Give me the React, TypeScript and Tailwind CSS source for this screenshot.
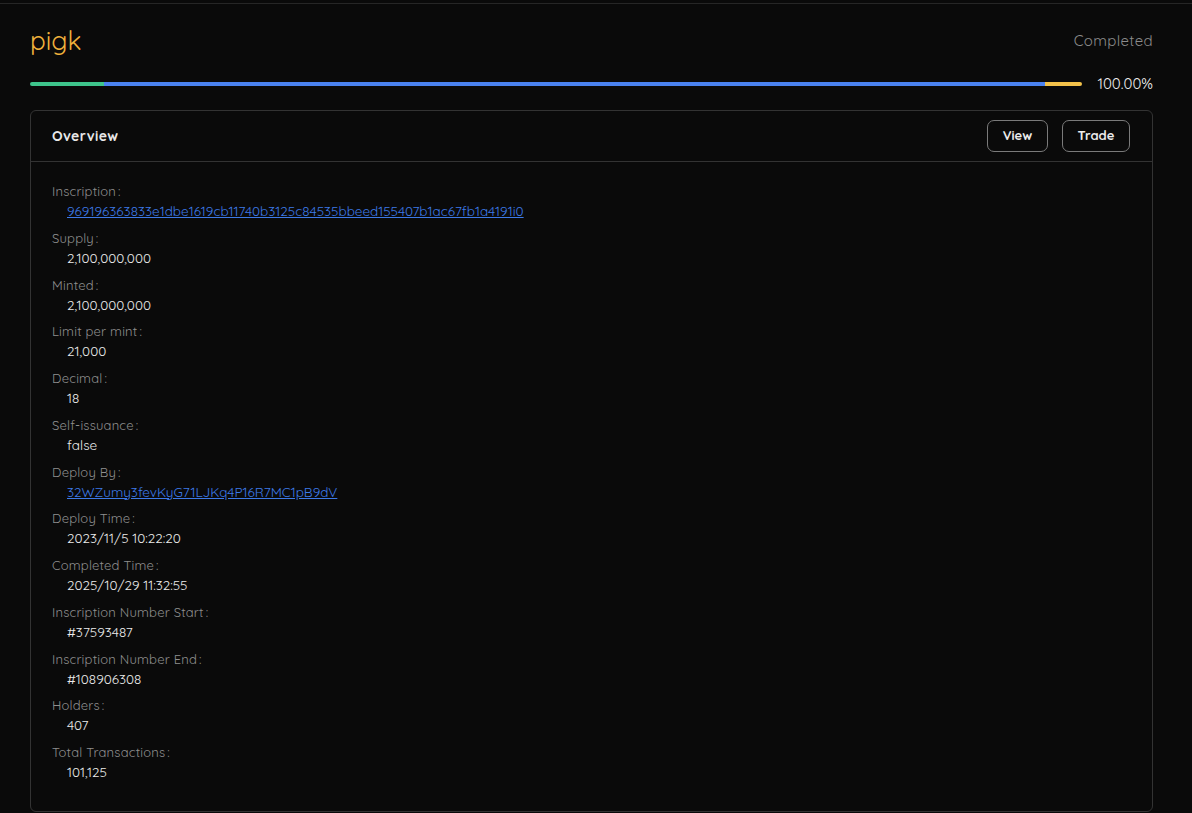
import React from 'react';

const rows: { label: string; value: string; link?: boolean }[] = [
  { label: 'Inscription', value: '969196363833e1dbe1619cb11740b3125c84535bbeed155407b1ac67fb1a4191i0', link: true },
  { label: 'Supply', value: '2,100,000,000' },
  { label: 'Minted', value: '2,100,000,000' },
  { label: 'Limit per mint', value: '21,000' },
  { label: 'Decimal', value: '18' },
  { label: 'Self-issuance', value: 'false' },
  { label: 'Deploy By', value: '32WZumy3fevKyG71LJKq4P16R7MC1pB9dV', link: true },
  { label: 'Deploy Time', value: '2023/11/5 10:22:20' },
  { label: 'Completed Time', value: '2025/10/29 11:32:55' },
  { label: 'Inscription Number Start', value: '#37593487' },
  { label: 'Inscription Number End', value: '#108906308' },
  { label: 'Holders', value: '407' },
  { label: 'Total Transactions', value: '101,125' },
];

export default function App() {
  return (
    <div className="min-h-[813px] bg-[#0a0a0a] text-[#e5e5e5]" style={{ fontFamily: 'Quicksand, Lato, sans-serif' }}>
      <div className="h-[4px] border-b border-[#262626]" />
      <div className="pl-[30px] pr-[39px] pt-[21px]">
        {/* Title */}
        <div className="flex items-center justify-between h-[32px]">
          <h1 className="text-[26px] text-[#f0b13c] leading-none">pigk</h1>
          <span className="text-[15px] text-[#8c8c8c] tracking-wide">Completed</span>
        </div>

        {/* Progress */}
        <div className="mt-[19px] flex items-center">
          <div className="flex-1 h-[4px] rounded-full overflow-hidden flex">
            <div className="w-[74px] bg-[#3ec58c]" />
            <div className="flex-1 bg-[#4a82f0]" />
            <div className="w-[37px] bg-[#f3c24a]" />
          </div>
          <span className="ml-[15px] text-[15px] text-[#f0f0f0] leading-none">100.00%</span>
        </div>

        {/* Overview card */}
        <div className="mt-[19px] border border-[#333] rounded-[6px]">
          <div className="h-[51px] flex items-center justify-between pl-[21px] pr-[22px] border-b border-[#333]">
            <h2 className="text-[14px] font-bold text-[#e8e8e8] tracking-wide">Overview</h2>
            <div className="flex gap-[14px]">
              <button className="h-[32px] w-[61px] rounded-[7px] border border-[#7a7a7a] text-[13px] font-bold text-[#ececec]">
                View
              </button>
              <button className="h-[32px] w-[68px] rounded-[7px] border border-[#7a7a7a] text-[13px] font-bold text-[#ececec]">
                Trade
              </button>
            </div>
          </div>

          <div className="pl-[21px] pt-[19px] pb-[22px]">
            {rows.map((r) => (
              <div key={r.label} className="mb-[6.75px]">
                <div className="h-[20px] leading-[20px] text-[13px] text-[#8f8f8f] tracking-[0.2px]">
                  {r.label}
                  <span className="ml-[2px]">:</span>
                </div>
                <div className="h-[20px] leading-[20px] text-[13.5px] pl-[15px]">
                  {r.link ? (
                    <a href="#" className="text-[#3d7ae8] underline">{r.value}</a>
                  ) : (
                    <span className="text-[#ececec]">{r.value}</span>
                  )}
                </div>
              </div>
            ))}
          </div>
        </div>
      </div>
    </div>
  );
}
